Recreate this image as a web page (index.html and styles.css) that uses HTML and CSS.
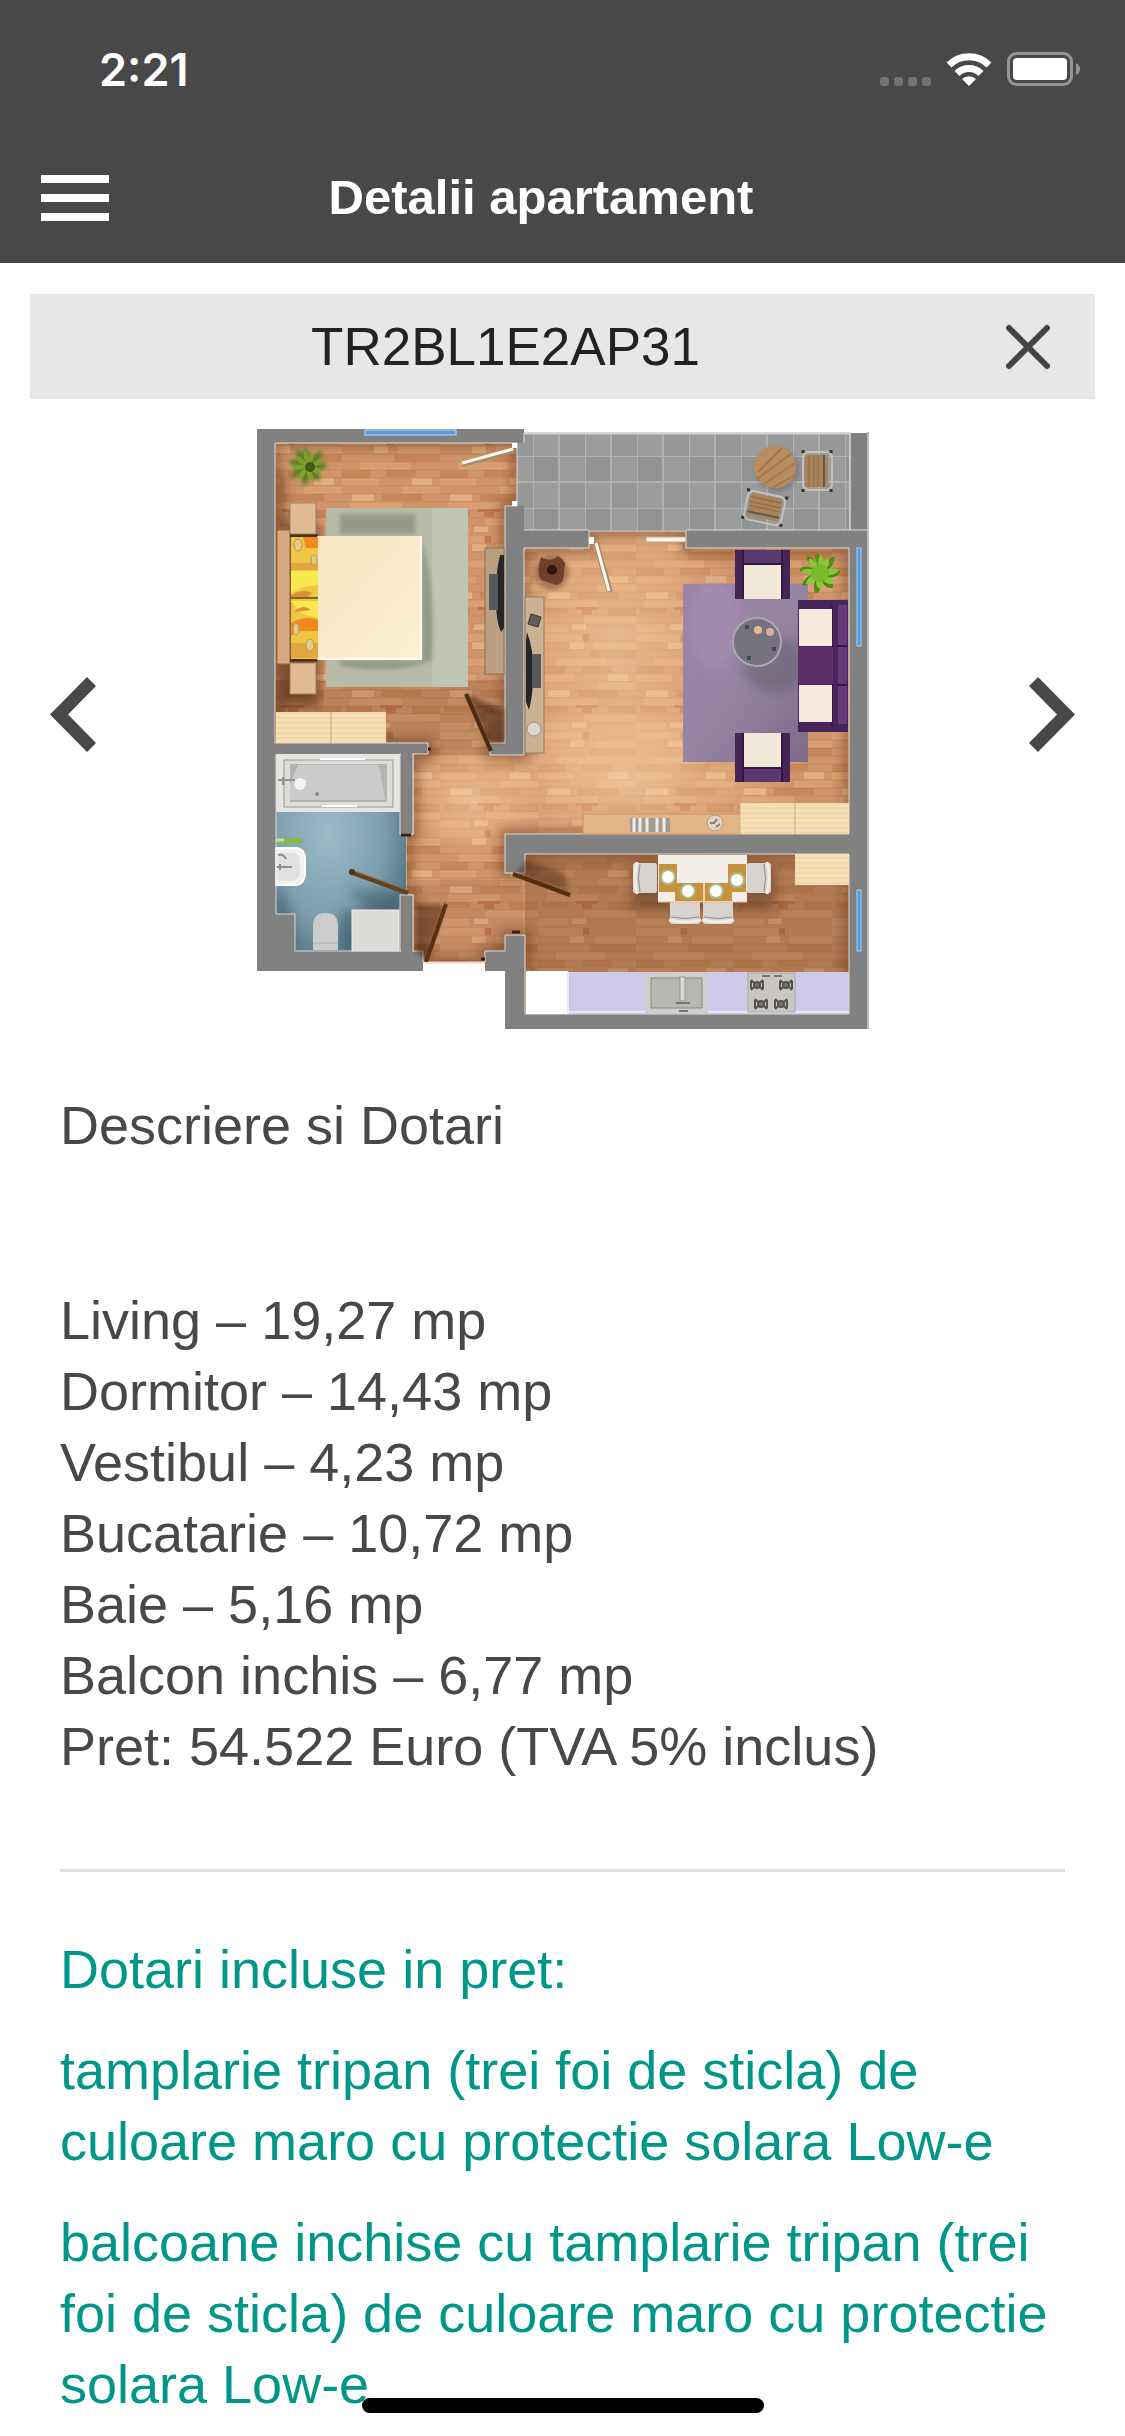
FILE: index.html
```html
<!DOCTYPE html>
<html lang="ro">
<head>
  <meta charset="UTF-8" />
  <meta name="viewport" content="width=device-width, initial-scale=1.0" />
  <title>Detalii apartament</title>
  <link rel="stylesheet" href="styles.css">
</head>
<body>
  <header class="header">
    <div class="status-bar">
      <span class="time">2:21</span>
      <div class="status-icons">
        <svg width="51" height="9" viewBox="0 0 51 9" fill="#737373" aria-hidden="true">
          <rect width="9" height="9" rx="3" />
          <rect x="14" width="9" height="9" rx="3" />
          <rect x="28" width="9" height="9" rx="3" />
          <rect x="42" width="9" height="9" rx="3" />
        </svg>
        <svg width="46" height="33" viewBox="0 0 46 33" fill="none" stroke="#fff" aria-hidden="true">
          <path d="M3 12 A28.5 28.5 0 0 1 43 12" stroke-width="7" />
          <path d="M11 20.500 A17 17 0 0 1 35 20.500" stroke-width="7" />
          <path d="M23 33 L16 26 A10 10 0 0 1 30 26 Z" fill="#fff" stroke="none" />
        </svg>
        <svg width="74" height="34" viewBox="0 0 74 34" aria-hidden="true">
          <rect x="1.500" y="1.500" width="63" height="31" rx="8" fill="none" stroke="#949494" stroke-width="3" />
          <rect x="6" y="6" width="54" height="22" rx="4" fill="#fff" />
          <path d="M69 11 Q73 13 73 17 Q73 21 69 23 Z" fill="#949494" />
        </svg>
      </div>
    </div>
    <div class="navbar">
      <button class="menu-button" type="button" aria-label="Meniu">
        <span></span><span></span><span></span>
      </button>
      <h1>Detalii apartament</h1>
    </div>
  </header>

  <main>
    <div class="code-bar">
      <h2>TR2BL1E2AP31</h2>
      <button class="close-button" type="button" aria-label="Inchide">
        <svg width="46" height="46" viewBox="0 0 46 46"><path d="M4 4 L42 42 M42 4 L4 42" stroke="#444" stroke-width="6" stroke-linecap="round" /></svg>
      </button>
    </div>

    <div class="carousel">
      <button class="arrow" type="button" aria-label="Inapoi">
        <svg width="46" height="75" viewBox="0 0 46 75"><path d="M37 0 L46 9 L18 37.500 L46 66 L37 75 L0 37.500 Z" fill="#484848" /></svg>
      </button>

      <svg class="plan" viewBox="16 18 613 602" role="img" aria-label="Plan apartament">
        <defs>
          <!-- parquet -->
          <pattern id="wood" width="98" height="98" x="4" y="28" patternUnits="userSpaceOnUse">
            <rect width="98" height="98" fill="#d0946a" />
            <g fill="#d99f73">
              <rect width="44" height="8" /><rect x="56" y="8" width="42" height="8" />
              <rect x="18" y="24" width="50" height="8" /><rect y="40" width="36" height="8" />
              <rect x="60" y="48" width="38" height="8" /><rect x="8" y="64" width="52" height="8" />
              <rect x="46" y="80" width="52" height="8" /><rect y="88" width="30" height="8" />
            </g>
            <g fill="#c68759">
              <rect x="52" y="16" width="46" height="8" /><rect y="32" width="28" height="8" />
              <rect x="40" y="56" width="40" height="7" /><rect x="70" y="72" width="28" height="8" />
              <rect x="4" y="72" width="26" height="6" /><rect x="44" y="32" width="30" height="7" />
            </g>
            <g fill="#e2ae82">
              <rect x="32" y="8" width="14" height="7" /><rect x="70" y="40" width="20" height="7" />
              <rect x="10" y="56" width="22" height="7" /><rect x="34" y="88" width="14" height="6" />
            </g>
            <g fill="#b5653a" opacity=".6">
              <rect x="44" y="71" width="10" height="8" /><rect x="38" y="71" width="22" height="3" />
              <rect x="45" y="0" width="6" height="7" />
            </g>
            <path d="M0 8H98M0 16H98M0 24H98M0 32H98M0 40H98M0 48H98M0 56H98M0 64H98M0 72H98M0 80H98M0 88H98" stroke="#a9663b" stroke-width="1" opacity=".25" />
          </pattern>
          <!-- balcony tiles -->
          <pattern id="tiles" width="52" height="52" x="293" y="46" patternUnits="userSpaceOnUse">
            <rect width="52" height="52" fill="#9b9c9c" />
            <rect width="26" height="26" fill="#929393" />
            <rect x="26" y="26" width="26" height="26" fill="#969797" />
            <path d="M0 0H52M0 26H52M0 0V52M26 0V52" stroke="#afb0b0" stroke-width="2" />
          </pattern>
          <pattern id="pale-wood" width="54" height="10" patternUnits="userSpaceOnUse">
            <rect width="54" height="10" fill="#f6dfb6" />
            <path d="M0 3H54M0 8H54" stroke="#e9cda0" stroke-width="1" />
          </pattern>
          <linearGradient id="bed" x1="0" y1="0" x2="1" y2="1">
            <stop offset="0" stop-color="#f6e6c3" /><stop offset="1" stop-color="#fff0d2" />
          </linearGradient>
          <radialGradient id="bath" cx=".4" cy=".4" r=".7">
            <stop offset="0" stop-color="#9cb9c8" /><stop offset=".6" stop-color="#7f9fae" /><stop offset="1" stop-color="#4f7081" />
          </radialGradient>
          <linearGradient id="rug" x1="0" y1="0" x2="1" y2="1">
            <stop offset="0" stop-color="#9c83a8" /><stop offset=".5" stop-color="#9585a3" /><stop offset="1" stop-color="#7b6b87" />
          </linearGradient>
          <radialGradient id="light">
            <stop offset="0" stop-color="#ffdcb0" stop-opacity=".5" /><stop offset=".6" stop-color="#ffd0a0" stop-opacity=".3" /><stop offset="1" stop-color="#ffd5a3" stop-opacity="0" />
          </radialGradient>
          <filter id="soft" x="-20%" y="-20%" width="140%" height="140%"><feGaussianBlur stdDeviation="6" /></filter>
          <filter id="soft-sm" x="-30%" y="-30%" width="160%" height="160%"><feGaussianBlur stdDeviation="2" /></filter>
          <path id="floor-shape" d="M35 33H277V96H265V333H250V345H284V138H349V121H446V138H609V424H265V463H285V444H609V604H285V525H265V541H245V552H183V541H173V485H166V424H173V344H188V333H35Z" />
          <clipPath id="floor-clip"><use href="#floor-shape" /></clipPath>
          <clipPath id="bath-clip"><path d="M36 344H160V424H166V485H160V541H55V504H36Z" /></clipPath>
          <g id="plant">
            <path d="M0 -4Q-8 -20 -3 -19Q4 -16 2 -4Q12 -20 15 -15Q14 -6 4 -1Q20 -6 20 0Q14 7 4 3Q17 12 12 15Q4 16 1 5Q2 21 -5 20Q-8 12 -3 4Q-17 17 -18 11Q-15 3 -5 1Q-21 1 -20 -5Q-13 -9 -5 -3Q-16 -14 -12 -17Q-5 -15 0 -4Z" />
          </g>
          <g id="armchair">
            <rect width="55" height="49" fill="#452556" />
            <rect x="8" width="39" height="14" fill="#5d386f" />
            <path d="M8 0V49M47 0V49M8 14H47" stroke="#34183f" stroke-width="2" />
            <rect x="9" y="15" width="37" height="34" fill="#f2ead9" />
          </g>
          <g id="chair">
            <rect width="30" height="24" rx="2" fill="#d8d3ce" />
            <path d="M-1 20Q15 24 31 20" fill="none" stroke="#f0ece8" stroke-width="3" />
            <path d="M1 17Q15 20 29 17" fill="none" stroke="#928d89" stroke-width="1" />
          </g>
          <g id="garden-chair">
            <rect width="38" height="29" rx="6" fill="none" stroke="#c3c1bd" stroke-width="2" />
            <rect x="3" y="2" width="32" height="23" fill="#a98358" />
            <path d="M3 6H35M3 11H35M3 15H35" stroke="#8a6742" stroke-width="1" />
            <path d="M3 21H35" stroke="#5b5a57" stroke-width="2" />
            <path d="M-2 0h3M37 0h3M-2 28h3M37 28h3" stroke="#333" stroke-width="3" />
          </g>
          <g id="burner" fill="none" stroke="#55524f" stroke-width="2">
            <circle r="3" fill="#77736f" />
            <path d="M-6 -5L-3 -2M6 -5L3 -2M-6 5L-3 2M6 5L3 2M-6 -4V4M6 -4V4" />
          </g>
        </defs>

        <!-- walls -->
        <path d="M17 19H284V23H628V619H265V561H245V552H183V561H17Z" fill="#818181" />
        <path d="M628 22V619" stroke="#bdbdbd" stroke-width="2" />

        <!-- balcony -->
        <path d="M284 22H610V24H284Z" fill="#d9d9d9" />
        <path d="M277 33H284V24H610V120H284V96H277Z" fill="url(#tiles)" />
        <path d="M284 24H610V120" fill="none" stroke="#cfcfcf" stroke-width="1" />
        <path d="M284 120H349M446 120H628" stroke="#dcdcdc" stroke-width="1" />
        <path d="M284 23V33M610 22V120" stroke="#dcdcdc" stroke-width="1" />

        <!-- floors -->
        <use href="#floor-shape" fill="url(#wood)" />
        <g clip-path="url(#floor-clip)">
          <ellipse cx="375" cy="240" rx="130" ry="170" fill="url(#light)" />
          <ellipse cx="390" cy="370" rx="160" ry="80" fill="url(#light)" />
          <ellipse cx="230" cy="390" rx="70" ry="60" fill="url(#light)" />
          <rect x="285" y="444" width="325" height="120" fill="#7a4a28" opacity=".35" />
          <rect x="173" y="470" width="110" height="90" fill="#6f3c1c" opacity=".1" />
          <rect x="35" y="270" width="230" height="75" fill="#6f3c1c" opacity=".2" />
          <use href="#floor-shape" fill="none" stroke="#4a2410" stroke-width="10" opacity=".45" filter="url(#soft)" />
          <path d="M40 60V320M42 115H76V294H42Z" fill="#4a2410" stroke="#4a2410" stroke-width="6" opacity=".6" filter="url(#soft)" />
        </g>
        <use href="#floor-shape" fill="none" stroke="#e5dacd" stroke-width="1" />

        <!-- windows -->
        <rect x="125" y="20" width="91" height="5" fill="#5b9bdc" stroke="#b8d8f5" stroke-width="1" />
        <rect x="617" y="138" width="4" height="98" fill="#4f9be0" stroke="#a5d2f8" stroke-width="1" />
        <rect x="617" y="480" width="4" height="61" fill="#4f9be0" stroke="#a5d2f8" stroke-width="1" />

        <!-- bedroom -->
        <use href="#plant" transform="translate(68 56) scale(.95)" fill="#4d7a1e" filter="url(#soft-sm)" />
        <use href="#plant" transform="translate(68 56) rotate(25) scale(.75)" fill="#7e9f2d" />
        <circle cx="70" cy="57" r="5" fill="#3d5c16" />
        <rect x="86" y="98" width="142" height="179" fill="#b7bba7" />
        <rect x="192" y="98" width="36" height="179" fill="#c3c8b7" opacity=".7" />
        <path d="M100 104H175V124H100ZM182 130Q196 180 192 250Q160 265 100 256V250H182Z" fill="#868d79" opacity=".7" filter="url(#soft-sm)" />
        <rect x="37" y="120" width="13" height="134" fill="#d6aa7f" stroke="#8e643f" stroke-width="1" />
        <g fill="#dfbc93" stroke="#a37d58" stroke-width="1">
          <rect x="50" y="93" width="26" height="31" /><rect x="50" y="253" width="26" height="31" />
        </g>
        <path d="M50 126H78M50 250H78" stroke="#4b2f19" stroke-width="3" />
        <rect x="77" y="126" width="105" height="124" fill="url(#bed)" />
        <path d="M77 249H181V126" fill="none" stroke="#fffaf0" stroke-width="2" />
        <!-- pillows -->
        <g transform="translate(0 -10)">
          <rect x="51" y="137" width="27" height="122" fill="#efc544" />
          <path d="M63 137H78V148H66ZM51 223Q65 215 78 220V231H58L51 236Z" fill="#f3881f" />
          <path d="M51 171H78V185L64 187L51 193ZM51 201H78V218L62 214Z" fill="#fae84f" />
          <path d="M51 163H78V170H51ZM51 243H78V258H51Z" fill="#e2a741" />
          <path d="M51 195Q64 188 72 193Q66 201 51 197M54 212Q63 203 71 210" fill="#d89339" />
          <path d="M51 198H78" stroke="#7f6a25" stroke-width="2" />
          <g fill="#e3cb87" stroke="#b59a5b" stroke-width="1">
            <ellipse cx="58" cy="145" rx="4" ry="6" /><ellipse cx="74" cy="160" rx="3" ry="5" />
            <ellipse cx="56" cy="229" rx="3" ry="6" /><ellipse cx="70" cy="245" rx="4" ry="6" />
          </g>
        </g>
        <rect x="36" y="302" width="110" height="31" fill="url(#pale-wood)" />
        <path d="M91 302V333" stroke="#c9a879" stroke-width="1" />
        <rect x="245" y="138" width="19" height="126" fill="#bb9f80" stroke="#8e7358" stroke-width="1" />
        <path d="M260 145Q255 165 256 190Q256 212 261 222L264 218V145Z" fill="#242628" />
        <rect x="249" y="164" width="9" height="36" fill="#56585a" />
        <path d="M222 54L274 40" stroke="#a18c70" stroke-width="6" /><path d="M222 53L273 39" stroke="#fdf8e9" stroke-width="3" />
        <path d="M272 33h5v5h-5zM272 91h5v5h-5z" fill="#fff" />
        <path d="M226 284L264 300V332H248Z" fill="#4a2a15" opacity=".6" filter="url(#soft-sm)" />
        <path d="M226 284L251 341" stroke="#4d2a13" stroke-width="4" />

        <!-- balcony furniture -->
        <circle cx="537" cy="60" r="22" fill="#666" opacity=".45" filter="url(#soft-sm)" />
        <circle cx="535" cy="57" r="21" fill="#b98c5f" />
        <path d="M518 62L542 38M517 69L551 44M524 74L555 53M532 78L555 65" stroke="#a4784d" stroke-width="2" />
        <use href="#garden-chair" transform="translate(563 80) rotate(-90)" />
        <use href="#garden-chair" transform="translate(509 80) rotate(12)" />

        <!-- living -->
        <rect x="443" y="174" width="125" height="178" fill="url(#rug)" />
        <ellipse cx="475" cy="215" rx="25" ry="45" fill="#b294bd" opacity=".4" filter="url(#soft)" />
        <ellipse cx="535" cy="255" rx="32" ry="28" fill="#655f70" opacity=".55" filter="url(#soft)" />
        <circle cx="517" cy="232" r="24" fill="#75727d" stroke="#aaa8b0" stroke-width="2" />
        <circle cx="518" cy="220" r="4" fill="#e6b795" /><circle cx="530" cy="222" r="4" fill="#dca8a8" />
        <path d="M505 217h4M532 239h4M507 248h4" stroke="#4b4a54" stroke-width="4" />
        <use href="#armchair" x="495" y="140" />
        <use href="#armchair" transform="translate(550 372) rotate(180)" />
        <path d="M558 190H608V322H558Z" fill="#47245a" />
        <path d="M598 195H607V314H598Z" fill="#663a7b" />
        <path d="M592 196V316M597 236H607M597 275H607" stroke="#34183f" stroke-width="2" />
        <rect x="559" y="199" width="33" height="37" fill="#f4ebdc" /><rect x="559" y="275" width="33" height="37" fill="#f4ebdc" />
        <rect x="558" y="237" width="35" height="37" fill="#5a2f68" />
        <use href="#plant" transform="translate(580 163)" fill="#4e8a18" />
        <use href="#plant" transform="translate(580 163) rotate(40) scale(.85)" fill="#86cb35" />
        <circle cx="580" cy="163" r="9" fill="#79bd2b" />
        <circle cx="312" cy="163" r="17" fill="#4a2414" opacity=".35" filter="url(#soft-sm)" />
        <path d="M301 147Q310 153 318 146Q328 152 324 160Q325 173 317 175Q310 173 301 170Q296 162 301 147Z" fill="#70412a" />
        <circle cx="312" cy="160" r="5" fill="#301810" />
        <rect x="285" y="187" width="19" height="156" fill="#cbb292" stroke="#977b5d" stroke-width="1" />
        <path d="M291 204L301 207L298 217L288 214Z" fill="#645c56" stroke="#393634" stroke-width="1" />
        <path d="M287 222Q294 240 293 265Q293 285 289 300L286 292V230Z" fill="#242628" />
        <rect x="292" y="244" width="9" height="34" fill="#56585a" />
        <circle cx="294" cy="319" r="7" fill="#ded8cc" stroke="#9c9180" stroke-width="1" />
        <path d="M349 127h5v7h-5z" fill="#fff" />
        <path d="M356 133L370 182" stroke="#a18c70" stroke-width="6" /><path d="M356 133L369 181" stroke="#fdf8e9" stroke-width="3" />
        <rect x="406" y="127" width="40" height="5" fill="#fdf8e9" stroke="#b9a386" stroke-width="1" />
        <rect x="343" y="404" width="158" height="20" fill="#e3b486" stroke="#c39366" stroke-width="1" />
        <rect x="500" y="393" width="109" height="31" fill="url(#pale-wood)" />
        <path d="M500 424V393M555 393V424" stroke="#ccb080" stroke-width="1" />
        <rect x="390" y="408" width="40" height="14" fill="#a19c94" />
        <path d="M394 408V422M400 408V422M407 408V422M417 408V422M424 408V422" stroke="#f0ede7" stroke-width="3" />
        <circle cx="475" cy="413" r="8" fill="#ddd3c7" stroke="#ab9a86" stroke-width="1" /><path d="M470 413h4l3-4M476 417l4-3" fill="none" stroke="#8e7c69" stroke-width="2" />

        <!-- bathroom -->
        <g clip-path="url(#bath-clip)">
          <rect x="36" y="344" width="130" height="198" fill="url(#bath)" />
          <path d="M105 478L160 485V504L130 500ZM36 536V470L50 500V541H160V500H100V541H60Z" fill="#223f50" opacity=".4" filter="url(#soft)" />
        </g>
        <rect x="36" y="344" width="124" height="58" fill="#e6e5e2" />
        <rect x="44" y="350" width="109" height="47" fill="#dddcd9" stroke="#989793" stroke-width="1" />
        <path d="M50 354H147V392H50Z" fill="#b4b3b3" />
        <path d="M58 355H139L145 390H50V375Z" fill="#cccaca" />
        <path d="M125 349H80M82 396H117" stroke="#fff" stroke-width="2" />
        <path d="M38 370H58M43 367V375" stroke="#8f8f92" stroke-width="2" /><path d="M55 371H66" stroke="#e9e9e9" stroke-width="3" />
        <circle cx="60" cy="374" r="6" fill="#f3f2f1" />
        <circle cx="77" cy="384" r="2" fill="#8a8a8a" />
        <path d="M36 431H62" stroke="#82bd35" stroke-width="5" /><path d="M36 430H44" stroke="#c2dd99" stroke-width="3" />
        <path d="M36 438H57Q66 440 65 450V464Q64 475 55 475H36Z" fill="#f1f1f0" stroke="#fff" stroke-width="2" />
        <path d="M38 443H54Q61 446 60 452V462Q59 470 52 471H38Z" fill="#e0e1e2" />
        <path d="M37 457H52M40 454V460M38 445Q44 444 46 449" fill="none" stroke="#8b8d8f" stroke-width="2" />
        <path d="M73 540V516Q73 503 86 503Q98 503 98 516V540Z" fill="#cbcdcd" />
        <path d="M73 533H98" stroke="#a9abac" stroke-width="1" />
        <rect x="112" y="500" width="47" height="41" fill="#dddbd8" stroke="#f1f1ef" stroke-width="1" />
        <rect x="160" y="344" width="13" height="80" fill="#818181" stroke="#d8d8d8" stroke-width="1" />
        <rect x="160" y="485" width="13" height="56" fill="#818181" stroke="#d8d8d8" stroke-width="1" />
        <path d="M36 344V504H55V541H165" fill="none" stroke="#d8d8d8" stroke-width="1" />
        <path d="M161 345H172M161 540H172" stroke="#818181" stroke-width="4" />
        <path d="M110 462L168 483" stroke="#65421f" stroke-width="4" /><path d="M112 460L160 477" stroke="#99703f" stroke-width="1" />
        <circle cx="112" cy="462" r="3" fill="#4c331b" />

        <!-- hall doors -->
        <path d="M205 495L187 551L176 541V495Z" fill="#3d1f0e" opacity=".5" filter="url(#soft-sm)" />
        <path d="M206 494L186 552" stroke="#5b3115" stroke-width="4" />
        <path d="M188 339h3M161 425h10M272 522h8M241 549h4" stroke="#3a2214" stroke-width="3" />
        <path d="M183 553H245" stroke="#f3e2cf" stroke-width="2" />
        <path d="M275 464L330 484L324 463L286 450Z" fill="#3d1f0e" opacity=".4" filter="url(#soft-sm)" />
        <path d="M273 464L330 485" stroke="#54300f" stroke-width="4" />

        <!-- kitchen -->
        <rect x="286" y="561" width="42" height="43" fill="#fff" />
        <rect x="328" y="562" width="281" height="42" fill="#cccae8" />
        <path d="M328 562V604M328 602H609" stroke="#e8e7f7" stroke-width="2" />
        <rect x="405" y="563" width="63" height="40" fill="#d0cecb" />
        <rect x="411" y="568" width="51" height="30" fill="#b9b7b3" stroke="#8b8985" stroke-width="1" />
        <rect x="440" y="567" width="5" height="24" fill="#dddbd7" stroke="#989591" stroke-width="1" />
        <path d="M436 593H450M439 601H448" stroke="#77746f" stroke-width="2" />
        <rect x="508" y="563" width="47" height="39" fill="#cac7c2" stroke="#aba8a4" stroke-width="1" />
        <path d="M522 566h8M534 566h8" stroke="#777" stroke-width="2" />
        <use href="#burner" x="517" y="575" /><use href="#burner" x="546" y="575" />
        <use href="#burner" x="521" y="594" /><use href="#burner" x="541" y="594" />
        <rect x="555" y="444" width="54" height="31" fill="url(#pale-wood)" />
        <path d="M392 455H535V500H392Z" fill="#3d1f0e" opacity=".4" filter="url(#soft)" />
        <use href="#chair" transform="translate(417 453) rotate(90)" />
        <use href="#chair" transform="translate(507 483) rotate(-90)" />
        <use href="#chair" x="430" y="490" /><use href="#chair" x="463" y="490" />
        <rect x="418" y="445" width="89" height="47" fill="#f3eee8" />
        <g fill="#c8913d">
          <rect x="419" y="454" width="18" height="28" /><rect x="488" y="454" width="18" height="28" />
          <rect x="435" y="473" width="28" height="18" /><rect x="465" y="473" width="27" height="18" />
        </g>
        <path d="M418 492H507M464 473V492" stroke="#eeb58a" stroke-width="1" />
        <g fill="#fff" stroke="#a6bb83" stroke-width="2">
          <circle cx="428" cy="467" r="7" /><circle cx="497" cy="470" r="7" />
          <circle cx="448" cy="481" r="7" /><circle cx="476" cy="481" r="7" />
        </g>
      </svg>

      <button class="arrow" type="button" aria-label="Inainte">
        <svg width="46" height="75" viewBox="0 0 46 75"><path d="M9 0 L0 9 L28 37.500 L0 66 L9 75 L46 37.500 Z" fill="#484848" /></svg>
      </button>
    </div>

    <section class="details">
      <h3>Descriere si Dotari</h3>
      <ul class="rooms">
        <li>Living – 19,27 mp</li>
        <li>Dormitor – 14,43 mp</li>
        <li>Vestibul – 4,23 mp</li>
        <li>Bucatarie – 10,72 mp</li>
        <li>Baie – 5,16 mp</li>
        <li>Balcon inchis – 6,77 mp</li>
        <li>Pret: 54.522 Euro (TVA 5% inclus)</li>
      </ul>
      <hr />
      <div class="features">
        <p>Dotari incluse in pret:</p>
        <p>tamplarie tripan (trei foi de sticla) de culoare maro cu protectie solara Low-e</p>
        <p>balcoane inchise cu tamplarie tripan (trei foi de sticla) de culoare maro cu protectie solara Low-e</p>
      </div>
    </section>
  </main>

  <div class="home-indicator"></div>
</body>
</html>
```
FILE: styles.css
```css
* {
  box-sizing: border-box;
}
body {
  margin: 0;
  background: #fff;
  color: #484848;
  font-family: "Helvetica Neue", "Liberation Sans", Arial, sans-serif;
  font-size: 54px;
  line-height: 71px;
}
h1, h2, h3, p, ul {
  margin: 0;
  padding: 0;
  font-size: inherit;
  font-weight: normal;
}
button {
  padding: 0;
  border: none;
  background: none;
  cursor: pointer;
}
svg {
  display: block;
}
.header {
  background: #484848;
  color: #fff;
}
.status-bar {
  display: flex;
  justify-content: space-between;
  align-items: center;
  height: 132px;
  padding: 6px 44px 0 99px;
}
.time {
  font-family: Inter, sans-serif;
  font-size: 45px;
  font-weight: 600;
}
.status-icons {
  display: flex;
  align-items: flex-end;
  gap: 15px;
}
.navbar {
  display: flex;
  align-items: center;
  height: 131px;
  padding: 0 152px 0 41px;
}
.navbar h1 {
  flex: 1;
  font-size: 49px;
  font-weight: bold;
  text-align: center;
}
.menu-button {
  display: flex;
  flex-direction: column;
  gap: 11px;
  width: 68px;
}
.menu-button span {
  height: 8px;
  background: #fff;
}
.code-bar {
  display: flex;
  align-items: center;
  height: 105px;
  margin: 31px 30px 0;
  padding-right: 20px;
  background: #e7e7e7;
}
.code-bar h2 {
  flex: 1;
  color: #222;
  font-size: 53px;
  text-align: center;
}
.close-button {
  display: flex;
  justify-content: center;
  width: 94px;
}
.carousel {
  display: flex;
  align-items: center;
  justify-content: space-between;
  padding: 0 50px;
}
.plan {
  flex: 0 1 613px;
  min-width: 0;
  margin-top: 29px;
}
.details {
  padding: 60px 60px 16px;
}
.rooms {
  margin-top: 124px;
  list-style: none;
}
hr {
  height: 3px;
  margin: 87px 0 62px;
  border: none;
  background: #ddd;
}
.features {
  display: flex;
  flex-direction: column;
  gap: 30px;
  color: #009688;
}
.home-indicator {
  position: fixed;
  bottom: 23px;
  left: 50%;
  width: 402px;
  height: 15px;
  margin-left: -201px;
  border-radius: 8px;
  background: #000;
}
```
